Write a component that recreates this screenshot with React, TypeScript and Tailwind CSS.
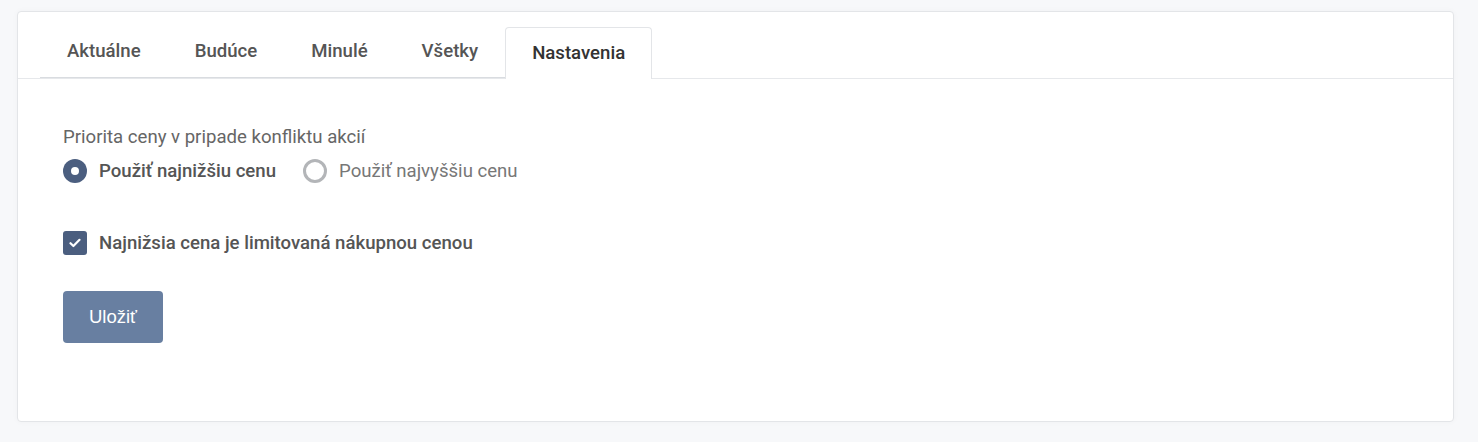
import { useState } from "react";

const tabs = ["Aktuálne", "Budúce", "Minulé", "Všetky", "Nastavenia"];

export default function App() {
  const [active, setActive] = useState("Nastavenia");
  const [priority, setPriority] = useState<"low" | "high">("low");
  const [limited, setLimited] = useState(true);

  return (
    <div className="min-h-[442px] bg-[#f7f8fa] pt-[11px] pl-[17px] pr-[24px] pb-[20px] font-['Roboto',sans-serif]">
      <div className="rounded-[4px] border border-[#e3e5e8] bg-white shadow-[0_0_6px_rgba(0,0,0,0.03)]">
        <div className="flex border-b border-[#e6e8eb] pl-[22px] pt-[15px]">
          {tabs.map((t) => {
            const on = t === active;
            return (
              <button
                key={t}
                onClick={() => setActive(t)}
                className={
                  on
                    ? "-mb-px h-[52px] rounded-t-[4px] border border-b-0 border-[#e3e5e8] bg-white px-[26px] text-[18.6px] font-medium text-[#333]"
                    : "h-[51px] border-b border-[#d9dce0] px-[27px] text-[18.6px] font-medium text-[#555]"
                }
              >
                {t}
              </button>
            );
          })}
        </div>

        <div className="px-[45px] pt-[46px] pb-[78px]">
          <div className="text-[18.6px] leading-6 text-[#666]">
            Priorita ceny v pripade konfliktu akcií
          </div>
          <div className="mt-[10px] flex items-center gap-[27px]">
            <label
              className="flex cursor-pointer items-center gap-[12px]"
              onClick={() => setPriority("low")}
            >
              {priority === "low" ? (
                <span className="flex h-6 w-6 items-center justify-center rounded-full bg-[#4b5e7f]">
                  <span className="h-[8px] w-[8px] rounded-full bg-white" />
                </span>
              ) : (
                <span className="h-6 w-6 rounded-full border-[3px] border-[#b3b5b8]" />
              )}
              <span
                className={
                  priority === "low"
                    ? "text-[18.6px] leading-6 font-medium text-[#555]"
                    : "text-[18.6px] leading-6 text-[#777]"
                }
              >
                Použiť najnižšiu cenu
              </span>
            </label>
            <label
              className="flex cursor-pointer items-center gap-[12px]"
              onClick={() => setPriority("high")}
            >
              {priority === "high" ? (
                <span className="flex h-6 w-6 items-center justify-center rounded-full bg-[#4b5e7f]">
                  <span className="h-[8px] w-[8px] rounded-full bg-white" />
                </span>
              ) : (
                <span className="h-6 w-6 rounded-full border-[3px] border-[#b3b5b8]" />
              )}
              <span
                className={
                  priority === "high"
                    ? "text-[18.6px] leading-6 font-medium text-[#555]"
                    : "text-[18.6px] leading-6 text-[#777]"
                }
              >
                Použiť najvyššiu cenu
              </span>
            </label>
          </div>

          <label
            className="mt-[48px] flex cursor-pointer items-center gap-[12px]"
            onClick={() => setLimited(!limited)}
          >
            <span
              className={
                limited
                  ? "flex h-6 w-6 items-center justify-center rounded-[3px] bg-[#4b5e7f]"
                  : "h-6 w-6 rounded-[3px] border-[3px] border-[#b3b5b8]"
              }
            >
              {limited && (
                <svg width="12" height="10" viewBox="0 0 12 10" fill="none">
                  <path
                    d="M1.5 5.2 4.4 8 10.5 1.8"
                    stroke="white"
                    strokeWidth="2.2"
                    strokeLinecap="round"
                    strokeLinejoin="round"
                  />
                </svg>
              )}
            </span>
            <span className="text-[18.6px] leading-6 font-medium text-[#555]">
              Najnižsia cena je limitovaná nákupnou cenou
            </span>
          </label>

          <button className="mt-[36px] h-[52px] w-[100px] rounded-[4px] bg-[#687fa1] font-['Liberation_Sans',Arial,sans-serif] text-[18.5px] text-white">
            Uložiť
          </button>
        </div>
      </div>
    </div>
  );
}
